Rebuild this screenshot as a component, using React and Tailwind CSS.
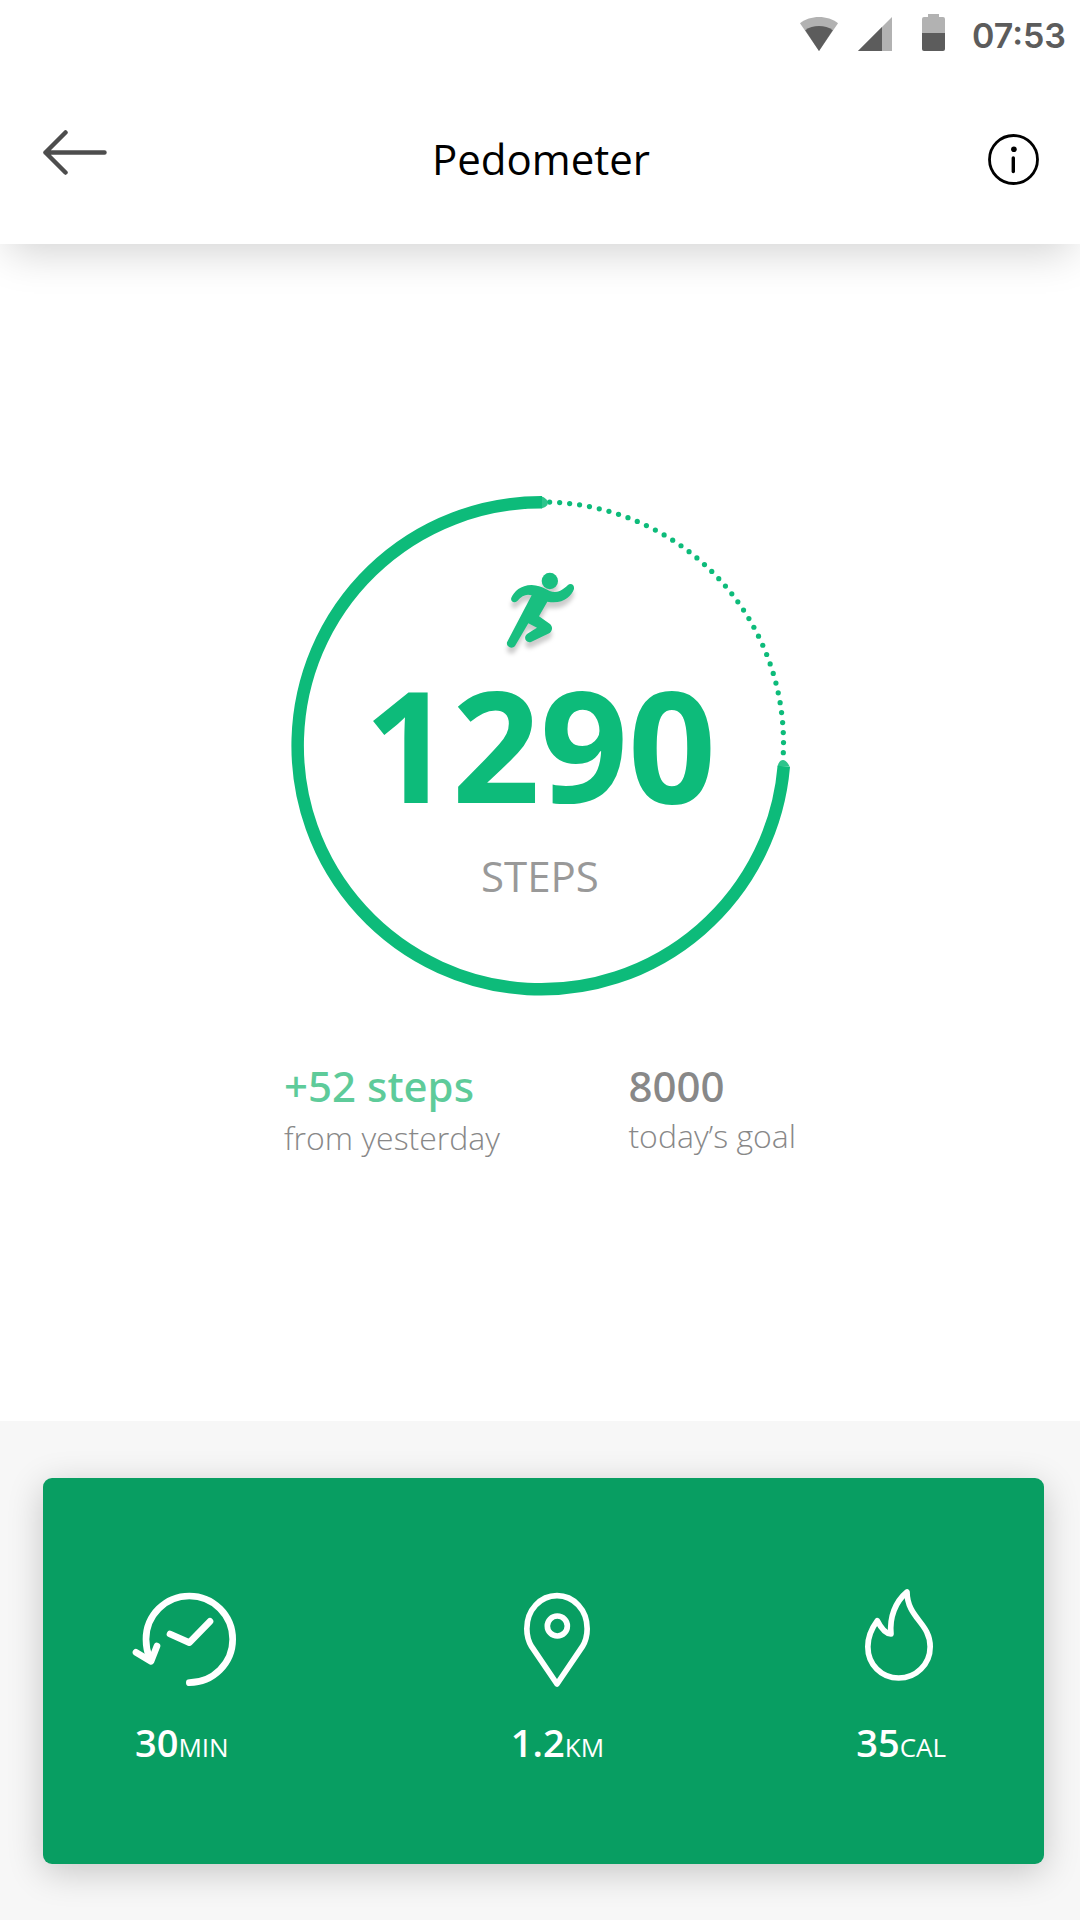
const DOTS = Array.from({ length: 39 }, (_, i) => {
  const angle = ((1.7 + i * 2.384) * Math.PI) / 180;
  return { x: 251.5 + 241 * Math.sin(angle), y: 247 - 241 * Math.cos(angle) };
});

function StatusBar() {
  return (
    <div className="flex h-[68px] items-start justify-end pr-3.5 pt-3.5">
      <svg className="mt-[3px] h-[34px] w-[38px]" viewBox="0 0 38 34" aria-hidden="true">
        <path d="M19 34 0 6.3C5 2.200 12 0 19 0s14 2.200 19 6.300Z" fill="#b2b2b2" />
        <path d="M19 34 5.200 13.200C9 10.300 14 9 19 9s10 1.300 13.800 4.200Z" fill="#5c5c5c" />
      </svg>
      <svg className="ml-5 mt-[3px] size-[34px]" viewBox="0 0 34 34" aria-hidden="true">
        <path d="M34 0v34H0Z" fill="#b2b2b2" />
        <path d="M24 10v24H0Z" fill="#5c5c5c" />
      </svg>
      <svg className="ml-[30px] h-[37px] w-[23px]" viewBox="0 0 23 37" aria-hidden="true">
        <path d="M6 0h11v3h4a2 2 0 0 1 2 2v14H0V5a2 2 0 0 1 2-2h4Z" fill="#b2b2b2" />
        <path d="M0 19h23v16a2 2 0 0 1-2 2H2a2 2 0 0 1-2-2Z" fill="#5c5c5c" />
      </svg>
      <time className="ml-[27px] mt-0.5 font-[Inter,sans-serif] text-[34px] font-semibold leading-10 text-[#5c5c5c]">
        07:53
      </time>
    </div>
  );
}

function Header() {
  return (
    <header className="relative bg-white shadow-[0_16px_40px_-8px_rgba(0,0,0,0.18)]">
      <StatusBar />
      <div className="grid h-44 grid-cols-[1fr_auto_1fr] items-center pl-[43px] pr-[41px] pt-1.5">
        <button type="button" aria-label="Back" className="justify-self-start">
          <svg className="h-[60px] w-16" viewBox="0 0 64 60" fill="none" stroke="#4d4d4d" strokeWidth="4.500" strokeLinecap="round" strokeLinejoin="round">
            <path d="M22.500 3.500 2.500 23.500l20 20M2.500 23.500h59" />
          </svg>
        </button>
        <h1 className="text-[42px] leading-14 text-black">Pedometer</h1>
        <button type="button" aria-label="Information" className="justify-self-end">
          <svg className="size-[51px]" viewBox="0 0 51 51" fill="none" stroke="#000">
            <circle cx="25.500" cy="25.500" r="24" strokeWidth="2.800" />
            <path d="M25.300 24v13.500" strokeWidth="3.400" strokeLinecap="round" />
            <circle cx="25.900" cy="15.300" r="2.800" fill="#000" stroke="none" />
          </svg>
        </button>
      </div>
    </header>
  );
}

function Runner() {
  return (
    <svg className="h-[84px] w-[72px] overflow-visible drop-shadow-[0_6px_2px_rgba(0,0,0,0.2)]" viewBox="672 270 216 252" fill="#19bf80" aria-hidden="true">
      <circle cx="809.500" cy="303" r="24.500" />
      <path d="M694 353C702 335 722 315 755 315C790 316 802 336 825 336C843 335 853 325 863 316C871 308 884 313 882 327C874 350 848 374 802 365L777 409L809 431C819 439 818 451 809 459L753 486C736 490 729 470 742 461L771 443L745 430L705 498C695 509 678 500 681 487L755 346C740 341 726 346 712 363C702 372 690 364 694 353Z" />
    </svg>
  );
}

function StepRing() {
  return (
    <section className="grid w-[500px] place-self-center" aria-label="Steps today">
      <svg className="col-start-1 row-start-1 w-full" viewBox="-1 0 500 500" fill="none" aria-hidden="true">
        <path d="M250.500 0.500Q254 1 256.500 5v4Q254 12 250.500 12.500Z" fill="#2cc48b" />
        <path d="M486.500 270.500C488 265 490 264 492 264S496.500 266 498.700 270.500Z" fill="#2cc48b" />
        <path d="M492.800 270.200A243.500 243.500 0 1 1 251 6.300" stroke="#0dbb7a" strokeWidth="12.500" />
        {DOTS.map((dot, i) => (
          <circle key={i} cx={dot.x} cy={dot.y} r="2.600" fill="#0dbb7a" />
        ))}
      </svg>
      <div className="col-start-1 row-start-1 flex flex-col items-center pt-[74px]">
        <Runner />
        <p className="mt-3 text-[154px] font-bold leading-none text-[#0dbb7a]">1290</p>
        <p className="mt-8 text-[42px] leading-12 text-[#999]">STEPS</p>
      </div>
    </section>
  );
}

function Metric({ value, unit, children }) {
  return (
    <li className="flex flex-col items-center">
      {children}
      <p className="mt-[30px] flex items-baseline whitespace-nowrap text-[38px] font-semibold leading-12 text-white">
        {value}
        <span className="text-[26px] font-normal leading-8">{unit}</span>
      </p>
    </li>
  );
}

export default function App() {
  return (
    <div className="flex min-h-screen flex-col bg-white font-['Open_Sans','Noto_Sans',sans-serif]">
      <Header />
      <main className="flex flex-1 flex-col">
        <div className="flex flex-1 flex-col items-center pt-[252px]">
          <StepRing />
          <div className="mt-[66px] flex w-[512px] justify-between text-[#888]">
            <div>
              <p className="font-['Noto_Sans',sans-serif] text-[42px] font-medium leading-12 text-[#5ecb9a]">+52 steps</p>
              <p className="mt-1.5 text-[32px] font-light leading-11">from yesterday</p>
            </div>
            <div>
              <p className="font-['Noto_Sans',sans-serif] text-[42px] font-medium leading-12">8000</p>
              <p className="mt-1 text-[32px] font-light leading-11">today’s goal</p>
            </div>
          </div>
        </div>
        <section className="bg-[#f7f7f7] pb-14 pl-[43px] pr-9 pt-[57px]" aria-label="Activity">
          <ul className="grid grid-cols-[278fr_474fr_214fr] rounded-[9px] bg-[#089e62] pb-[98px] pr-9 pt-[110px] shadow-[0_8px_36px_rgba(0,0,0,0.2)]">
            <Metric value="30" unit="MIN">
              <svg className="h-[100px] w-[108px]" viewBox="84 54 324 300" fill="none" stroke="#fff" strokeWidth="20" strokeLinecap="round" strokeLinejoin="round" aria-hidden="true">
                <path d="M268 338A130 130 0 1 0 138 208Q138 238 149 266" />
                <path d="M108 247 153 274 171 228M210 192l58 26 62-64" />
              </svg>
            </Metric>
            <Metric value="1.2" unit="KM">
              <svg className="size-[100px]" viewBox="84 54 300 300" fill="none" stroke="#fff" strokeWidth="17" strokeLinejoin="round" aria-hidden="true">
                <path d="M234 342 158 230C147 212 143.500 196 143.500 176C143.500 120 184 77 234 77S324.500 120 324.500 176C324.500 196 321 212 310 230Z" />
                <circle cx="235" cy="168" r="30" />
              </svg>
            </Metric>
            <Metric value="35" unit="CAL">
              <svg className="size-[100px]" viewBox="93 54 300 300" fill="none" stroke="#fff" strokeWidth="17" strokeLinejoin="round" aria-hidden="true">
                <path d="M261 66C262 145 330.500 158 330.500 230C330.500 283 288 324 236 324S143.500 283 143.500 230C143.500 200 155 175 172 152C180 168 192 190 213 192C208 142 226 95 261 66Z" />
              </svg>
            </Metric>
          </ul>
        </section>
      </main>
    </div>
  );
}
